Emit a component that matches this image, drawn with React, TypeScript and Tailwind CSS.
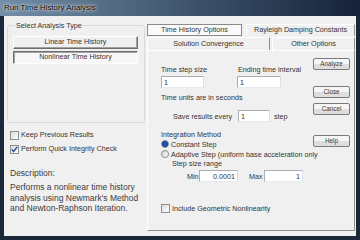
import { type ReactNode } from "react";

/* ── small Win7-ish controls ── */
function CheckBox({ checked = false }: { checked?: boolean }) {
  return (
    <span className="w-[9px] h-[9px] shrink-0 border border-[#8e8f8f] bg-linear-to-br from-[#dadada] to-white flex items-center justify-center">
      {checked && (
        <svg width="7" height="7" viewBox="0 0 7 7">
          <path d="M0.8 3.4 L2.7 5.4 L6.2 0.9" stroke="#2a4596" strokeWidth="1.4" fill="none" />
        </svg>
      )}
    </span>
  );
}

function Radio({ checked = false }: { checked?: boolean }) {
  return (
    <span className="w-[8px] h-[8px] shrink-0 rounded-full border border-[#8a8a8a] bg-linear-to-br from-[#d6d6d6] to-white flex items-center justify-center">
      {checked && <span className="w-[4px] h-[4px] rounded-full bg-[#1c58c4] ring-1 ring-[#0d3a8a]" />}
    </span>
  );
}

function WinButton({ children, className = "" }: { children: ReactNode; className?: string }) {
  return (
    <div
      className={`h-[12px] w-[37px] rounded-[2px] border border-[#7a7a7a] bg-linear-to-b from-[#f6f6f6] from-50% to-[#dedede] to-50% flex items-center justify-center text-[6.3px] text-[#3a3a3a] ${className}`}
    >
      {children}
    </div>
  );
}

function TextBox({ value, className = "", right = false }: { value: string; className?: string; right?: boolean }) {
  return (
    <div
      className={`h-[12px] bg-white border border-[#abadb3] border-r-[#dbdfe6] border-b-[#e3e9ef] flex items-center px-[2px] text-[7.2px] ${
        right ? "justify-end" : ""
      } ${className}`}
    >
      {value}
    </div>
  );
}

function Tab({ label, selected = false, className = "" }: { label: string; selected?: boolean; className?: string }) {
  return (
    <div
      className={`flex items-center justify-center text-[7.2px] ${
        selected
          ? "bg-[#fafafa] border border-[#8a8a8a]"
          : "bg-[#f0f0f0] border-l border-t border-l-white border-t-white border-r border-r-[#8f8f8f]"
      } ${className}`}
    >
      {label}
    </div>
  );
}

export default function App() {
  return (
    <div className="w-[360px] h-[240px] flex flex-col bg-[#1b2839] font-['Liberation_Sans',Arial,sans-serif] text-[#333] whitespace-nowrap overflow-hidden">
      {/* title bar */}
      <div className="h-[16px] shrink-0 flex items-center pl-[4px] bg-linear-to-r from-[#728ea9] via-[#41576f] to-[#16233a]">
        <span className="text-[7.9px] text-black [text-shadow:0_0_5px_#fff,0_0_2px_#fff]">
          Run Time History Analysis
        </span>
      </div>

      <div className="flex-1 mx-[4px] mb-[4px] bg-[#f0f0f0] flex">
        {/* left column */}
        <div className="w-[143px] shrink-0 flex flex-col">
          <fieldset className="ml-[3px] mt-[5px] w-[138px] h-[102px] border border-[#d3dbe2] rounded-[3px] pl-[5px] pt-[6px]">
            <legend className="ml-[2px] px-[1px] text-[7.2px] leading-[9px]">Select Analysis Type</legend>
            <div className="flex flex-col gap-[2px]">
              <div className="w-[125px] h-[13px] bg-[#f0f0f0] border border-t-white border-l-white border-r-[#6e6e6e] border-b-[#6e6e6e] shadow-[inset_-1px_-1px_0_#a0a0a0] flex items-center justify-center text-[7.2px]">
                Linear Time History
              </div>
              <div className="w-[125px] h-[13px] bg-[#f7f7f7] border border-t-[#6e6e6e] border-l-[#6e6e6e] border-r-white border-b-white shadow-[inset_1px_1px_0_#a0a0a0] flex items-center justify-center text-[7.2px]">
                Nonlinear Time History
              </div>
            </div>
          </fieldset>

          <div className="mt-[7px] ml-[6px] h-[10px] flex items-center gap-[2px] text-[7.2px]">
            <CheckBox />
            <span>Keep Previous Results</span>
          </div>
          <div className="mt-[4px] ml-[6px] h-[10px] flex items-center gap-[2px] text-[7.2px]">
            <CheckBox checked />
            <span>Perform Quick Integrity Check</span>
          </div>

          <div className="mt-[14px] ml-[6px] text-[8.5px] leading-[10px] text-[#3c3c3c]">Description:</div>
          <p className="mt-[4px] ml-[6px] text-[8.5px] leading-[10.5px] text-[#3c3c3c]">
            Performs a nonlinear time history
            <br />
            analysis using Newmark's Method
            <br />
            and Newton-Raphson Iteration.
          </p>
        </div>

        {/* right column: tabs + panel */}
        <div className="w-[208px] shrink-0 flex flex-col pt-[8px]">
          <div className="flex h-[12px] gap-[4px]">
            <Tab label="Time History Options" selected className="w-[95px]" />
            <Tab label="Rayleigh Damping Constants" className="flex-1" />
          </div>
          <div className="flex h-[13px] mt-[1px] gap-[2px]">
            <Tab label="Solution Convergence" className="w-[123px]" />
            <Tab label="Other Options" className="flex-1" />
          </div>

          <div className="h-[181px] border border-t-white border-l-white border-r-[#8f8f8f] border-b-[#8f8f8f] flex">
            <div className="flex-1 min-w-0 pl-[13px] flex flex-col text-[7.2px] leading-[9px]">
              <div className="mt-[14px] grid grid-cols-[76px_44px]">
                <span>Time step size</span>
                <span className="pl-[1px]">Ending time interval</span>
              </div>
              <div className="mt-[2px] grid grid-cols-[76px_44px]">
                <TextBox value="1" className="w-[43px]" />
                <TextBox value="1" className="w-[44px]" />
              </div>
              <div className="mt-[5px]">Time units are in seconds</div>

              <div className="mt-[8px] ml-[12px] flex items-center">
                <span className="w-[65px]">Save results every</span>
                <TextBox value="1" className="w-[32px]" />
                <span className="ml-[4px]">step</span>
              </div>

              <div className="mt-[8px]">Integration Method</div>
              <div className="h-[10px] flex items-center gap-[2px]">
                <Radio checked />
                <span>Constant Step</span>
              </div>
              <div className="h-[10px] flex items-center gap-[2px]">
                <Radio />
                <span>Adaptive Step (uniform base acceleration only</span>
              </div>
              <div className="pl-[11px]">Step size range</div>
              <div className="mt-[2px] pl-[26px] flex items-center">
                <span className="w-[12px]">Min</span>
                <TextBox value="0.0001" right className="w-[39px]" />
                <span className="ml-[11px] w-[15px]">Max</span>
                <TextBox value="1" right className="w-[39px]" />
              </div>

              <div className="mt-[21px] h-[10px] flex items-center gap-[2px]">
                <CheckBox />
                <span>Include Geometric Nonlinearity</span>
              </div>
            </div>

            <div className="w-[37px] shrink-0 mr-[4px] flex flex-col">
              <WinButton className="mt-[7px]">Analyze</WinButton>
              <WinButton className="mt-[16px]">Close</WinButton>
              <WinButton className="mt-[5px]">Cancel</WinButton>
              <WinButton className="mt-[20px]">Help</WinButton>
            </div>
          </div>
        </div>
      </div>
    </div>
  );
}
